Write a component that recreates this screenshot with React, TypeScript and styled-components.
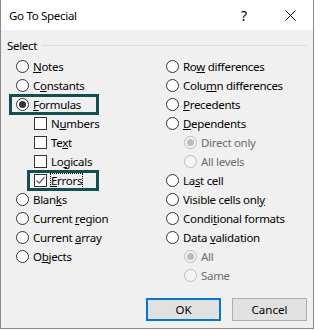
import React from 'react';
import styled, { createGlobalStyle, css } from 'styled-components';

const GlobalStyle = createGlobalStyle`
  html, body {
    margin: 0;
    padding: 0;
    background: #ffffff;
  }
  body {
    font-family: "Noto Sans", "Segoe UI", "Liberation Sans", sans-serif;
    font-size: 11.5px;
    color: #000000;
  }
`;

const Dialog = styled.div`
  width: 314px;
  height: 329px;
  box-sizing: border-box;
  border: 1px solid #8a8a8a;
  border-top: none;
  background: #f0f0f0;
  display: flex;
  flex-direction: column;
`;

const TitleBar = styled.div`
  height: 30px;
  background: #ffffff;
  display: flex;
  align-items: center;
  padding-left: 8px;
`;

const Title = styled.div`
  flex: 1;
  font-size: 11.5px;
  letter-spacing: -0.3px;
`;

const CaptionButton = styled.div`
  width: 46px;
  height: 30px;
  display: flex;
  align-items: center;
  justify-content: center;
  font-size: 14px;
`;

const Body = styled.div`
  flex: 1;
  display: flex;
  flex-direction: column;
  padding: 7px 6px 7px 6px;
`;

const GroupHeader = styled.div`
  display: flex;
  align-items: center;
  gap: 5px;
  height: 16px;
  letter-spacing: -0.3px;

  &::after {
    content: '';
    flex: 1;
    height: 1px;
    margin-top: 1px;
    background: #dcdcdc;
  }
`;

const Columns = styled.div`
  display: grid;
  grid-template-columns: 150px 1fr;
  padding-left: 9px;
  margin-top: 4px;
`;

const Column = styled.div`
  display: flex;
  flex-direction: column;
`;

const highlightBox = css<{ $hlWidth?: number }>`
  &::after {
    content: '';
    position: absolute;
    left: -7px;
    top: -1px;
    bottom: -1px;
    width: ${({ $hlWidth }) => $hlWidth}px;
    box-sizing: border-box;
    border: 3px solid #124f50;
    pointer-events: none;
  }
`;

const Row = styled.div<{ $indent?: boolean; $hlWidth?: number }>`
  position: relative;
  height: 19px;
  display: flex;
  align-items: center;
  gap: 4px;
  margin-left: ${({ $indent }) => ($indent ? 18 : 0)}px;
  ${({ $hlWidth }) => ($hlWidth ? highlightBox : '')}
`;

const Label = styled.span<{ $disabled?: boolean; $focused?: boolean }>`
  color: ${({ $disabled }) => ($disabled ? '#6d6d6d' : '#000000')};
  line-height: 14px;
  white-space: nowrap;
  letter-spacing: -0.3px;
  outline: ${({ $focused }) => ($focused ? '1px dotted #000' : 'none')};
  outline-offset: 0;
`;

const Accel = styled.span`
  text-decoration: underline;
  text-underline-offset: 1px;
`;

const RadioCircle = styled.span<{ $checked?: boolean; $disabled?: boolean }>`
  position: relative;
  width: 13px;
  height: 13px;
  flex: none;
  box-sizing: border-box;
  border-radius: 50%;
  border: 1px solid ${({ $disabled }) => ($disabled ? '#bcbcbc' : '#333333')};
  background: ${({ $disabled }) => ($disabled ? '#f4f4f4' : '#ffffff')};

  &::after {
    content: '';
    display: ${({ $checked }) => ($checked ? 'block' : 'none')};
    position: absolute;
    left: 2px;
    top: 2px;
    width: 7px;
    height: 7px;
    border-radius: 50%;
    background: ${({ $disabled }) => ($disabled ? '#bcbcbc' : '#333333')};
  }
`;

const CheckBox = styled.span`
  width: 13px;
  height: 13px;
  flex: none;
  box-sizing: border-box;
  border: 1px solid #333333;
  background: #ffffff;
  display: flex;
  align-items: center;
  justify-content: center;
`;

const Footer = styled.div`
  margin-top: auto;
  display: flex;
  justify-content: flex-end;
  gap: 11px;
`;

const Button = styled.button<{ $primary?: boolean }>`
  width: 75px;
  height: 23px;
  box-sizing: border-box;
  font-family: inherit;
  font-size: 11.5px;
  color: #000;
  background: #e1e1e1;
  border: ${({ $primary }) => ($primary ? '2px solid #0078d7' : '1px solid #adadad')};
  padding: 0;
`;

type Item = {
  label: React.ReactNode;
  kind?: 'radio' | 'check';
  checked?: boolean;
  disabled?: boolean;
  indent?: boolean;
  hl?: number;
  focused?: boolean;
};

const u = (before: string, key: string, after: string) => (
  <>
    {before}
    <Accel>{key}</Accel>
    {after}
  </>
);

const leftItems: Item[] = [
  { label: u('', 'N', 'otes') },
  { label: u('C', 'o', 'nstants') },
  { label: u('', 'F', 'ormulas'), checked: true, hl: 90 },
  { label: u('N', 'u', 'mbers'), kind: 'check', indent: true },
  { label: u('Te', 'x', 't'), kind: 'check', indent: true },
  { label: u('Lo', 'g', 'icals'), kind: 'check', indent: true },
  { label: u('', 'E', 'rrors'), kind: 'check', indent: true, checked: true, hl: 72, focused: true },
  { label: u('Blan', 'k', 's') },
  { label: u('Current ', 'r', 'egion') },
  { label: u('Current ', 'a', 'rray') },
  { label: u('O', 'b', 'jects') },
];

const rightItems: Item[] = [
  { label: u('Ro', 'w', ' differences') },
  { label: u('Colu', 'm', 'n differences') },
  { label: u('', 'P', 'recedents') },
  { label: u('', 'D', 'ependents') },
  { label: 'Direct only', indent: true, disabled: true, checked: true },
  { label: 'All levels', indent: true, disabled: true },
  { label: u('La', 's', 't cell') },
  { label: u('Visible cells onl', 'y', '') },
  { label: u('Condi', 't', 'ional formats') },
  { label: u('Data ', 'v', 'alidation') },
  { label: 'All', indent: true, disabled: true, checked: true },
  { label: 'Same', indent: true, disabled: true },
];

const CheckMark = () => (
  <svg width="11" height="11" viewBox="0 0 11 11">
    <path d="M1.5 5.5 L4.2 8.2 L9.5 2.2" fill="none" stroke="#555" strokeWidth="1.2" />
  </svg>
);

const OptionRow = ({ item }: { item: Item }) => (
  <Row $indent={item.indent} $hlWidth={item.hl}>
    {item.kind === 'check' ? (
      <CheckBox>{item.checked && <CheckMark />}</CheckBox>
    ) : (
      <RadioCircle $checked={item.checked} $disabled={item.disabled} />
    )}
    <Label $disabled={item.disabled} $focused={item.focused}>
      {item.label}
    </Label>
  </Row>
);

const App = () => (
  <>
    <GlobalStyle />
    <Dialog>
      <TitleBar>
        <Title>Go To Special</Title>
        <CaptionButton>?</CaptionButton>
        <CaptionButton>
          <svg width="11" height="11" viewBox="0 0 11 11">
            <path d="M0.5 0.5 L10.5 10.5 M10.5 0.5 L0.5 10.5" stroke="#000" strokeWidth="1" />
          </svg>
        </CaptionButton>
      </TitleBar>
      <Body>
        <GroupHeader>Select</GroupHeader>
        <Columns>
          <Column>
            {leftItems.map((item, i) => (
              <OptionRow key={i} item={item} />
            ))}
          </Column>
          <Column>
            {rightItems.map((item, i) => (
              <OptionRow key={i} item={item} />
            ))}
          </Column>
        </Columns>
        <Footer>
          <Button $primary>OK</Button>
          <Button>Cancel</Button>
        </Footer>
      </Body>
    </Dialog>
  </>
);

export default App;
